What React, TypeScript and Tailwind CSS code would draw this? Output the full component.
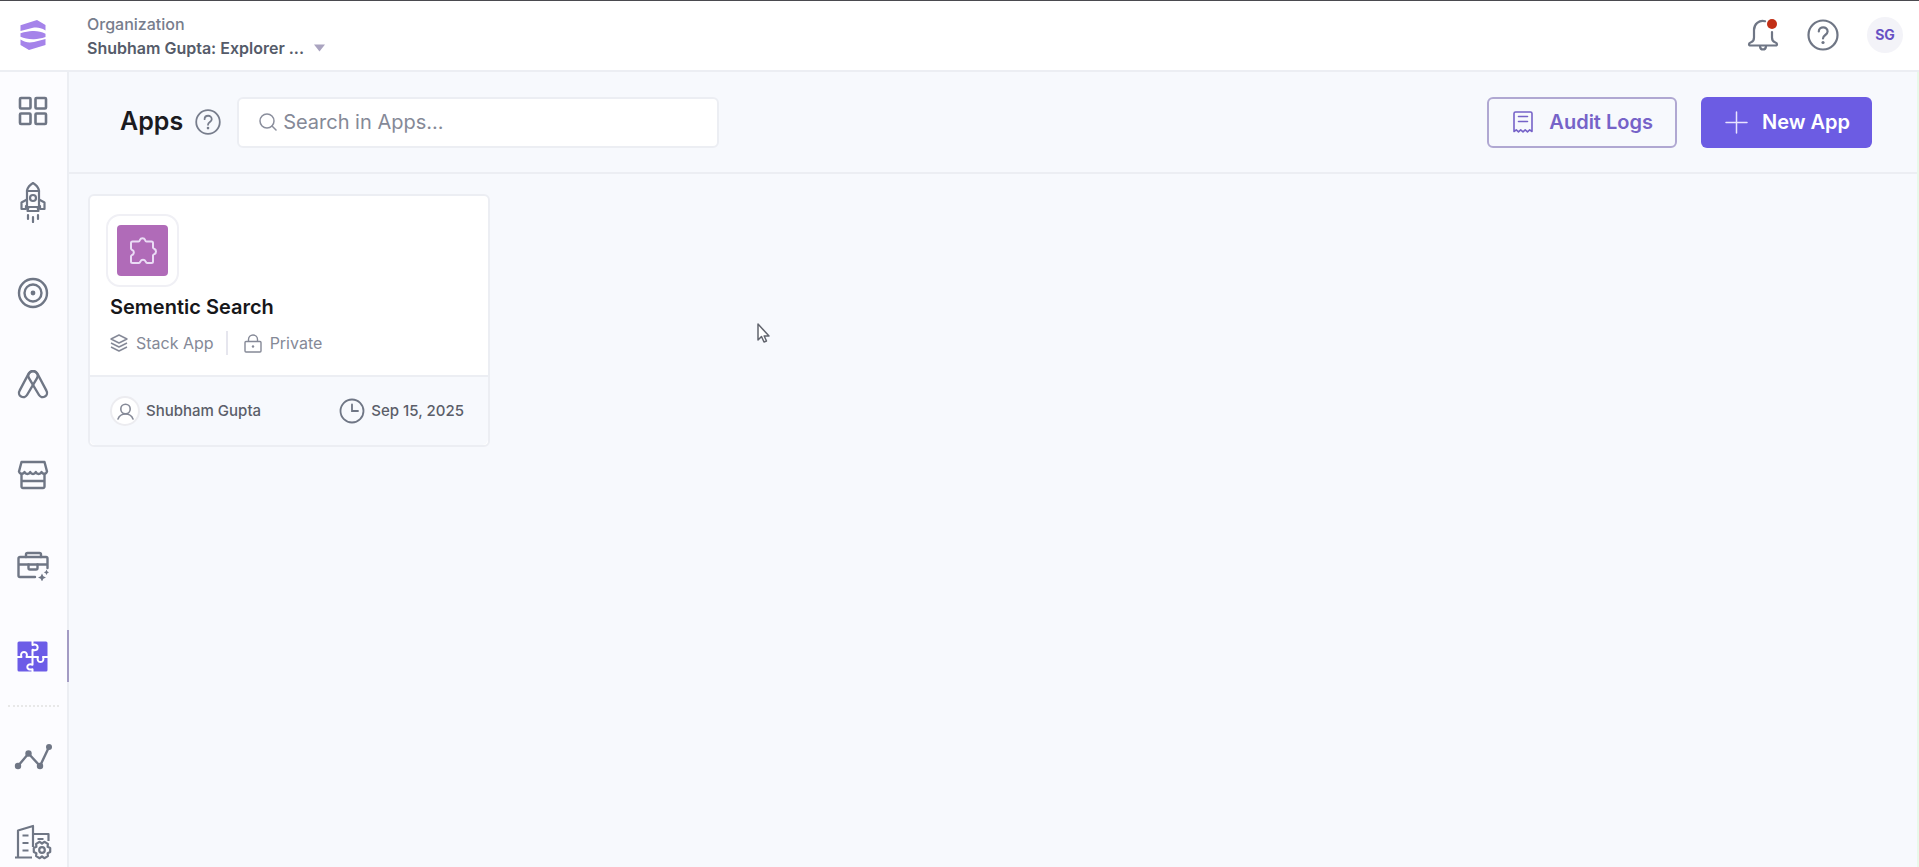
import type { ReactNode } from 'react';

type IconProps = { className?: string };

function LogoIcon() {
  return (
    <svg width="26" height="32" viewBox="0 0 26 32" fill="#a583ea">
      <path d="M.5 6.2 17 1l8.500 5v5.600c-5-3.200-9-3.400-13.500-2.600L.5 12z" />
      <path d="M.5 14.200C6 12.600 10 11.600 14 12c4 .2 8 1 11.500 2.700V18C21 19.400 17 20.400 13 20.200 8 20 4 19.200.5 17.700z" />
      <path d="M.5 20.500c4.500 3 9 3.400 13.500 2.400l11.500-3v6L9 31 .5 26z" />
    </svg>
  );
}

function GridIcon() {
  return (
    <svg width="30" height="30" viewBox="0 0 30 30" fill="none" stroke="currentColor" strokeWidth="2.600">
      <rect x="2" y="2" width="10.500" height="10.500" rx="1" />
      <rect x="17.500" y="2" width="10.500" height="10.500" rx="1" />
      <rect x="2" y="17.500" width="10.500" height="10.500" rx="1" />
      <rect x="17.500" y="17.500" width="10.500" height="10.500" rx="1" />
    </svg>
  );
}

function RocketIcon() {
  return (
    <svg width="28" height="42" viewBox="0 0 28 42" fill="none" stroke="currentColor" strokeWidth="2.200" strokeLinejoin="round" strokeLinecap="round">
      <path d="M8 26V9.500C9 5.500 11.500 3.500 14 2c2.500 1.500 5 3.500 6 7.500V26z" />
      <path d="M8 10h12" />
      <circle cx="14" cy="17" r="3" />
      <path d="M8 18.500l-5.500 3V28H7v-3M20 18.500l5.500 3V28H21v-3" />
      <path d="M9.500 26l-1 4h11l-1-4" />
      <path d="M9 34v4M14 36v5M19 34v4" />
    </svg>
  );
}

function TargetIcon() {
  return (
    <svg width="32" height="32" viewBox="0 0 32 32" fill="none" stroke="currentColor" strokeWidth="2.400">
      <circle cx="16" cy="16" r="14" />
      <circle cx="16" cy="16" r="8.500" />
      <circle cx="16" cy="16" r="2.400" fill="currentColor" stroke="none" />
    </svg>
  );
}

function AutomateIcon() {
  return (
    <svg width="32" height="30" viewBox="0 0 32 30" fill="none" stroke="currentColor" strokeWidth="2.400" strokeLinejoin="round">
      <path d="M11.800 4.300A4.800 4.800 0 0 1 20.200 8.900L10 26a4.300 4.300 0 0 1-7.400-4.400z" />
      <path d="M20.200 4.300A4.800 4.800 0 0 0 11.800 8.900L22 26a4.300 4.300 0 0 0 7.400-4.400z" />
    </svg>
  );
}

function StoreIcon() {
  return (
    <svg width="32" height="30" viewBox="0 0 32 30" fill="none" stroke="currentColor" strokeWidth="2.400" strokeLinejoin="round">
      <path d="M4.500 2h23L30 11.500c-.8 3-4.300 3-5.500.5-1.300 2.600-4.500 2.600-5.700 0-1.200 2.600-4.400 2.600-5.600 0-1.200 2.600-4.400 2.600-5.700 0C6.300 14.500 2.800 14.500 2 11.500z" />
      <path d="M4.500 14v12.500a1.500 1.500 0 0 0 1.500 1.500h20a1.500 1.500 0 0 0 1.500-1.500V14M4.500 21h23" />
    </svg>
  );
}

function BriefcaseIcon() {
  return (
    <svg width="32" height="30" viewBox="0 0 32 30" fill="none" stroke="currentColor" strokeWidth="2.400" strokeLinejoin="round" strokeLinecap="round">
      <path d="M9 6V3.500A1.500 1.500 0 0 1 10.500 2h12A1.500 1.500 0 0 1 24 3.500V6" />
      <path d="M18 26H3a1.500 1.500 0 0 1-1.500-1.500v-17A1.500 1.500 0 0 1 3 6h26a1.500 1.500 0 0 1 1.500 1.500V17M1.500 13.500h29" />
      <path d="M11.500 13.500V17a1.500 1.500 0 0 0 1.500 1.500h6a1.500 1.500 0 0 0 1.500-1.500v-3.500" />
      <path fill="currentColor" stroke="none" d="M25 22.500l1.300 2.700 2.700 1.300-2.700 1.300-1.300 2.700-1.300-2.700-2.700-1.300 2.700-1.300zM29.500 18.500l.9 1.900 1.600.9-1.600.9-.9 1.900-.9-1.900-1.800-.9 1.800-.9z" />
    </svg>
  );
}

function AppsIcon() {
  return (
    <svg width="31" height="31" viewBox="0 0 31 31">
      <rect x=".5" y=".5" width="30" height="30" rx="1.500" fill="#6c5ce7" />
      <path
        d="M15.500 0v4c3-1.200 5.200.2 5.200 2.400s-2.200 3.600-5.200 2.400v15c-3-1.200-5.200.2-5.200 2.200s2.200 3.200 5.200 2.200V31M0 16h4.500c-1.200-3 .2-5 2.500-5s3.700 2 2.500 5H21c-1.200 3 .2 5 2.500 5s3.700-2 2.500-5h5"
        fill="none"
        stroke="#fff"
        strokeWidth="2"
        strokeLinejoin="round"
      />
    </svg>
  );
}

function LineChartIcon() {
  return (
    <svg width="38" height="28" viewBox="0 0 38 28" fill="currentColor">
      <path d="M4 24 14.500 11.500 26 24 35 5" fill="none" stroke="currentColor" strokeWidth="2.400" />
      <circle cx="4" cy="24" r="3.200" />
      <circle cx="14.500" cy="11.500" r="3.200" />
      <circle cx="26" cy="24" r="3.200" />
      <circle cx="35" cy="5" r="3" />
    </svg>
  );
}

function OrgSettingsIcon() {
  return (
    <svg width="38" height="36" viewBox="0 0 38 36" fill="none" stroke="currentColor" strokeWidth="2.200" strokeLinejoin="round">
      <path d="M1 33.500h17M4 33.500V6.500L19 2v21M19 10h15.500v7" />
      <path d="M8.500 11.500h6M8.500 19h6M8.500 26.500h6M23.500 15h6" />
      <path d="M36.200 23.900v4.200l-2.600 1.200.3 2.800-3.600 2.100-2.300-1.700-2.300 1.700-3.600-2.100.3-2.800-2.600-1.200v-4.200l2.600-1.100-.3-2.900 3.600-2.100 2.300 1.700 2.300-1.700 3.600 2.100-.3 2.900z" />
      <circle cx="28" cy="26" r="2.800" />
    </svg>
  );
}

function BellIcon() {
  return (
    <svg width="32" height="32" viewBox="0 0 32 32" fill="none" stroke="currentColor" strokeWidth="2.200" strokeLinejoin="round" strokeLinecap="round">
      <path d="M18 2.200C12 .8 7 5 7 11v7.500c0 2.500-.8 4-3 4.700-1.500.5-2 1-2 1.800s.5 1.500 1.500 1.500h25c1 0 1.500-.7 1.500-1.500s-.5-1.300-2-1.800c-2.200-.7-3-2.200-3-4.700V13" />
      <path d="M13 27.500c.5 4 5.500 4 6 0" />
    </svg>
  );
}

function HelpIcon({ className }: IconProps) {
  return (
    <svg className={className} viewBox="0 0 32 32" fill="none" stroke="currentColor" strokeWidth="2.200" strokeLinecap="round">
      <circle cx="16" cy="16" r="14.500" />
      <path d="M11.800 12.500c0-5.600 8.800-5.600 8.800 0 0 3.500-4.600 3.500-4.600 7" />
      <circle cx="16" cy="23.500" r="1.600" fill="currentColor" stroke="none" />
    </svg>
  );
}

function AuditIcon() {
  return (
    <svg width="20" height="22" viewBox="0 0 20 22" fill="none" stroke="currentColor" strokeWidth="1.600" strokeLinejoin="round" strokeLinecap="round">
      <path d="M1 20.500V2.500A1.500 1.500 0 0 1 2.500 1h15A1.500 1.500 0 0 1 19 2.500v18l-2.300-1.700-2.200 2-2.300-2-2.200 2-2.300-2-2.200 2-2.200-2z" />
      <path d="M5.500 5.500h9M5.500 10.500h9" />
    </svg>
  );
}

function PuzzleIcon() {
  return (
    <svg width="28" height="28" viewBox="0 0 28 28" fill="none" stroke="#eadcf5" strokeWidth="2" strokeLinejoin="round">
      <path d="M3.500 4.500h6c1 0 1.200-.8 1.500-1.700.8-2.200 4.200-2.200 5 0 .3.900.5 1.700 1.500 1.700h5c1 0 1.500.5 1.500 1.500v4.500c0 1 .8 1.200 1.500 1.500 2 1 2 4 0 5-.7.300-1.500.5-1.500 1.500v6c0 1-.5 1.500-1.500 1.500h-4.500c-1 0-1-1-1.500-1.800-1-1.800-4-1.800-5 0-.5.800-.5 1.800-1.500 1.800H3.500c-1 0-1.500-.5-1.500-1.500v-5c0-1 .8-1.300 1.500-1.700 1.800-1 1.800-3.600 0-4.600-.7-.4-1.500-.7-1.500-1.700V6c0-1 .5-1.500 1.500-1.500z" />
    </svg>
  );
}

function LayersIcon() {
  return (
    <svg width="18" height="18" viewBox="0 0 18 18" fill="none" stroke="currentColor" strokeWidth="1.400" strokeLinejoin="round">
      <path d="M9 1 17 5 9 9 1 5zM1 9l8 4 8-4M1 13l8 4 8-4" />
    </svg>
  );
}

function LockIcon() {
  return (
    <svg width="18" height="19" viewBox="0 0 18 19" fill="none" stroke="currentColor" strokeWidth="1.400">
      <rect x="1" y="7.500" width="16" height="10.500" rx="1" />
      <path d="M4.500 7.500V5.500a4.500 4.500 0 0 1 9 0v2" />
      <circle cx="9" cy="12.500" r="1.200" fill="currentColor" stroke="none" />
    </svg>
  );
}

function UserIcon() {
  return (
    <svg width="17" height="17" viewBox="0 0 17 17" fill="none" stroke="currentColor" strokeWidth="1.600" strokeLinecap="round">
      <circle cx="8.500" cy="6" r="4.700" />
      <path d="M1 16c1.200-3.200 3.800-5 7.500-5s6.300 1.800 7.500 5" />
    </svg>
  );
}

function ClockIcon() {
  return (
    <svg className="text-[#6f7685]" width="26" height="26" viewBox="0 0 26 26" fill="none" stroke="currentColor" strokeWidth="1.800" strokeLinecap="round">
      <circle cx="13" cy="13" r="11.500" />
      <path d="M13 6.500V13h6" />
    </svg>
  );
}

const navItems: { label: string; icon: ReactNode }[] = [
  { label: 'Dashboard', icon: <GridIcon /> },
  { label: 'Launch', icon: <RocketIcon /> },
  { label: 'Personalize', icon: <TargetIcon /> },
  { label: 'Automate', icon: <AutomateIcon /> },
  { label: 'Marketplace', icon: <StoreIcon /> },
  { label: 'Workspace', icon: <BriefcaseIcon /> },
  { label: 'Apps', icon: <AppsIcon /> },
];

const footerItems: { label: string; icon: ReactNode }[] = [
  { label: 'Analytics', icon: <LineChartIcon /> },
  { label: 'Organization settings', icon: <OrgSettingsIcon /> },
];

function Sidebar() {
  return (
    <aside className="flex w-[69px] shrink-0 flex-col border-r-2 border-[#eceef3] bg-[#fcfcff] text-[#6f7685]">
      <nav className="-mt-1 flex flex-col">
        {navItems.map((item) => (
          <a key={item.label} href="#" aria-label={item.label} className="relative flex h-[91px] items-center justify-center pr-0.5 pb-1.5">
            {item.icon}
            {item.label === 'Apps' && <span className="absolute top-4 -right-0.5 h-[52px] w-0.5 bg-[#a39bc4]" />}
          </a>
        ))}
        <hr className="mx-2 mb-1.5 border-t-2 border-dotted border-[#e8e8e8]" />
        {footerItems.map((item) => (
          <a key={item.label} href="#" aria-label={item.label} className="flex h-[86px] items-center justify-center pr-0.5">
            {item.icon}
          </a>
        ))}
      </nav>
    </aside>
  );
}

function Header() {
  return (
    <header className="flex h-[72px] shrink-0 items-center border-t border-b-2 border-t-[#4a4a4f] border-b-[#eceef3] bg-white pr-4">
      <a href="#" aria-label="Home" className="flex w-[67px] justify-center pr-0.5 pb-0.5">
        <LogoIcon />
      </a>
      <button className="ml-5 text-left text-[#555b69]">
        <span className="block text-base leading-6 font-medium text-[#777d8c]">Organization</span>
        <span className="flex items-center gap-2.5 text-base leading-6 font-semibold">
          Shubham Gupta: Explorer ...
          <svg width="11" height="8" viewBox="0 0 11 8" fill="#aaa4c0"><path d="M0 .5h11L5.500 7.500z" /></svg>
        </span>
      </button>
      <div className="ml-auto flex items-center pb-0.5 text-[#6f7685]">
        <button aria-label="Notifications" className="relative">
          <BellIcon />
          <span className="absolute top-0 right-0.5 size-2.5 rounded-full bg-[#c22f16]" />
        </button>
        <button aria-label="Help" className="ml-7">
          <HelpIcon className="size-8" />
        </button>
        <button className="ml-7 size-9 rounded-full bg-[#f3f3f8] text-sm font-bold text-[#6751c4]">SG</button>
      </div>
    </header>
  );
}

function Toolbar() {
  return (
    <div className="flex h-[102px] items-center border-b-2 border-[#eceef3] pr-[45px] pl-[51px]">
      <h1 className="text-[25px] font-semibold text-[#1b1b1f]">Apps</h1>
      <button aria-label="About apps" className="ml-3 text-[#777d8c]">
        <HelpIcon className="size-[26px]" />
      </button>
      <label className="ml-4 flex h-[51px] w-[482px] items-center gap-1.5 rounded-md border-2 border-[#eceef3] bg-white pl-5 text-[#8a8e9c]">
        <svg width="18" height="18" viewBox="0 0 18 18" fill="none" stroke="currentColor" strokeWidth="1.500" strokeLinecap="round">
          <circle cx="8" cy="8" r="7" />
          <path d="m13 13 4 4" />
        </svg>
        <input type="text" aria-label="Search in Apps" placeholder="Search in Apps..." className="min-w-0 flex-1 bg-transparent text-xl outline-none placeholder:text-[#858997]" />
      </label>
      <button className="ml-auto flex h-[51px] items-center gap-4 rounded-md border-2 border-[#b0a8d2] pr-[22px] pl-6 text-xl font-semibold text-[#7663c8]">
        <AuditIcon />
        Audit Logs
      </button>
      <button className="ml-6 flex h-[51px] items-center gap-3.5 rounded-md bg-[#6c5ce3] pr-[22px] pl-6 text-xl font-semibold text-white">
        <svg width="23" height="23" viewBox="0 0 23 23" stroke="#e9e4ff" strokeWidth="1.500" strokeLinecap="round"><path d="M11.500 1v21M1 11.500h21" /></svg>
        New App
      </button>
    </div>
  );
}

function AppCard() {
  return (
    <article className="w-[402px] rounded-md border-2 border-[#eceef3] bg-white">
      <div className="px-5 pt-[18px] pb-5">
        <div className="-ml-1 flex size-[73px] items-center justify-center rounded-[14px] border-2 border-[#f0f0f5]">
          <div className="flex size-[51px] items-center justify-center rounded bg-[#b06bb8]">
            <PuzzleIcon />
          </div>
        </div>
        <h2 className="mt-1 text-xl leading-8 font-semibold text-[#17171a]">Sementic Search</h2>
        <div className="mt-2 flex items-center text-base leading-6 text-[#858997]">
          <LayersIcon />
          <span className="ml-2">Stack App</span>
          <span className="mr-4 ml-3 h-6 w-0.5 bg-[#e6e6ee]" />
          <LockIcon />
          <span className="ml-2">Private</span>
        </div>
      </div>
      <div className="flex h-[70px] items-center justify-between rounded-b-md border-t-2 border-[#eceef3] bg-[#f7f9fd] pr-6 pl-5 text-[15px] font-medium text-[#5b5e69]">
        <span className="flex items-center gap-1.5">
          <span className="flex size-[30px] items-center justify-center rounded-full border-2 border-[#ececf0] bg-white text-[#858997]">
            <UserIcon />
          </span>
          Shubham Gupta
        </span>
        <span className="flex items-center gap-1.5">
          <ClockIcon />
          Sep 15, 2025
        </span>
      </div>
    </article>
  );
}

export default function App() {
  return (
    <div className="relative flex h-screen flex-col overflow-hidden bg-[#f7f9fd] font-['Inter',sans-serif]">
      <Header />
      <div className="flex min-h-0 flex-1">
        <Sidebar />
        <main className="min-w-0 flex-1 border-r-2 border-[#e9f9ea]">
          <Toolbar />
          <section className="flex flex-wrap gap-5 px-[19px] py-5">
            <AppCard />
          </section>
        </main>
      </div>
      <svg className="pointer-events-none absolute top-[323px] left-[757px]" width="14" height="20" viewBox="0 0 14 20" fill="#fff" stroke="#62656e" strokeWidth="1.500" strokeLinejoin="round">
        <path d="M1 1v16l3.500-3.500L7 19l2.500-1-2.300-5H12z" />
      </svg>
    </div>
  );
}
